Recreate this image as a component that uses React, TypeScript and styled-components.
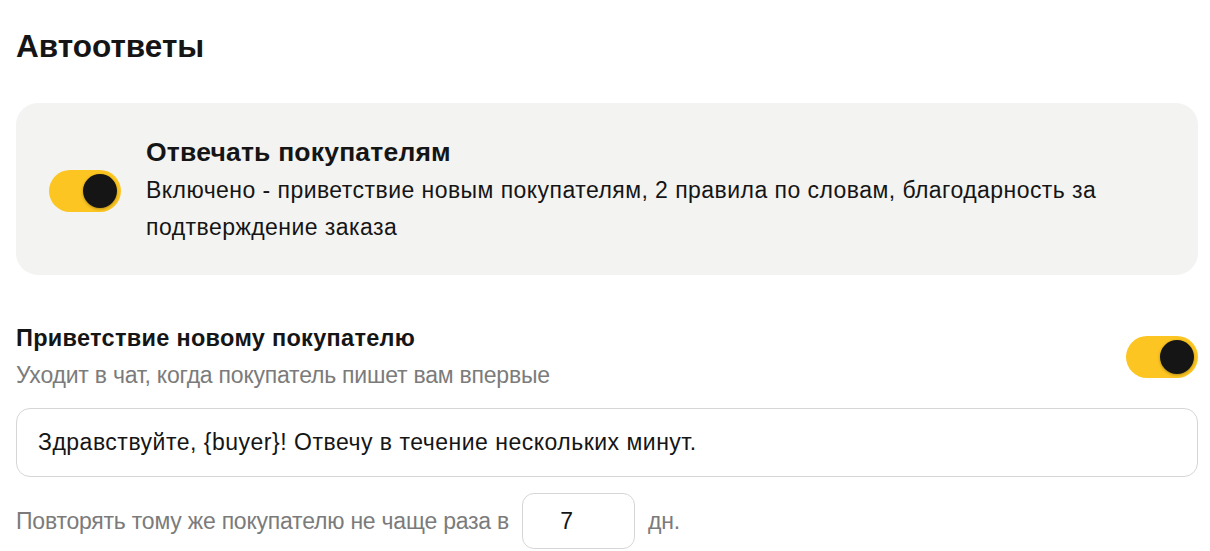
import React, { useState } from "react";
import styled, { createGlobalStyle } from "styled-components";

const GlobalStyle = createGlobalStyle`
  body {
    margin: 0;
    background: #ffffff;
    font-family: "Liberation Sans", Arial, sans-serif;
    color: #151515;
  }
`;

const Page = styled.div`
  padding: 25px 12px 0 16px;
  display: flex;
  flex-direction: column;
`;

const Heading = styled.h1`
  margin: 0;
  font-size: 31.5px;
  font-weight: 700;
  line-height: 42px;
`;

const Card = styled.div`
  margin-top: 36px;
  background: #f3f3f1;
  border-radius: 22px;
  padding: 32px 32px 29px 33px;
  display: flex;
  align-items: center;
  gap: 25px;
`;

const Track = styled.button<{ $on: boolean }>`
  flex: none;
  width: 72px;
  height: 42px;
  border: none;
  border-radius: 21px;
  padding: 4px;
  background: ${(p) => (p.$on ? "#fcc521" : "#d9d9d6")};
  display: flex;
  justify-content: ${(p) => (p.$on ? "flex-end" : "flex-start")};
  align-items: center;
  cursor: pointer;
`;

const Knob = styled.span`
  width: 34px;
  height: 34px;
  border-radius: 50%;
  background: #151515;
  box-shadow: 0 1px 3px rgba(0, 0, 0, 0.3);
`;

const CardText = styled.div`
  display: flex;
  flex-direction: column;
`;

const CardTitle = styled.div`
  font-size: 26.5px;
  font-weight: 700;
  line-height: 34px;
  letter-spacing: 0.2px;
`;

const CardDesc = styled.div`
  margin-top: 3px;
  font-size: 23px;
  line-height: 37px;
  letter-spacing: 0.45px;
`;

const Section = styled.div`
  margin-top: 47px;
  display: flex;
  align-items: center;
  justify-content: space-between;
`;

const SectionText = styled.div`
  display: flex;
  flex-direction: column;
`;

const SectionTitle = styled.div`
  font-size: 23.5px;
  font-weight: 700;
  line-height: 32px;
  letter-spacing: 0.3px;
`;

const Muted = styled.div`
  font-size: 23px;
  line-height: 34px;
  letter-spacing: -0.22px;
  color: #7b7b7b;
  margin-top: 4px;
`;

const MessageBox = styled.div`
  margin-top: 16px;
  height: 69px;
  box-sizing: border-box;
  border: 1px solid #d6d6d6;
  border-radius: 14px;
  padding: 0 21px;
  display: flex;
  align-items: center;
  font-size: 23px;
  letter-spacing: 0.5px;
`;

const RepeatRow = styled.div`
  margin-top: 16px;
  display: flex;
  align-items: center;
  gap: 13px;
`;

const RepeatText = styled.span`
  font-size: 23px;
  letter-spacing: -0.22px;
  color: #7b7b7b;
`;

const NumberBox = styled.div`
  width: 113px;
  height: 56px;
  box-sizing: border-box;
  border: 1px solid #d6d6d6;
  border-radius: 12px;
  padding-right: 24px;
  display: flex;
  align-items: center;
  justify-content: center;
  font-size: 23px;
  color: #151515;
`;

const Toggle = ({ on, onClick }: { on: boolean; onClick: () => void }) => (
  <Track $on={on} onClick={onClick}>
    <Knob />
  </Track>
);

export default function App() {
  const [main, setMain] = useState(true);
  const [greet, setGreet] = useState(true);

  return (
    <>
      <GlobalStyle />
      <Page>
        <Heading>Автоответы</Heading>
        <Card>
          <Toggle on={main} onClick={() => setMain(!main)} />
          <CardText>
            <CardTitle>Отвечать покупателям</CardTitle>
            <CardDesc>
              Включено - приветствие новым покупателям, 2 правила по словам,
              благодарность за подтверждение заказа
            </CardDesc>
          </CardText>
        </Card>
        <Section>
          <SectionText>
            <SectionTitle>Приветствие новому покупателю</SectionTitle>
            <Muted>Уходит в чат, когда покупатель пишет вам впервые</Muted>
          </SectionText>
          <Toggle on={greet} onClick={() => setGreet(!greet)} />
        </Section>
        <MessageBox>
          Здравствуйте, {"{buyer}"}! Отвечу в течение нескольких минут.
        </MessageBox>
        <RepeatRow>
          <RepeatText>Повторять тому же покупателю не чаще раза в</RepeatText>
          <NumberBox>7</NumberBox>
          <RepeatText>дн.</RepeatText>
        </RepeatRow>
      </Page>
    </>
  );
}
